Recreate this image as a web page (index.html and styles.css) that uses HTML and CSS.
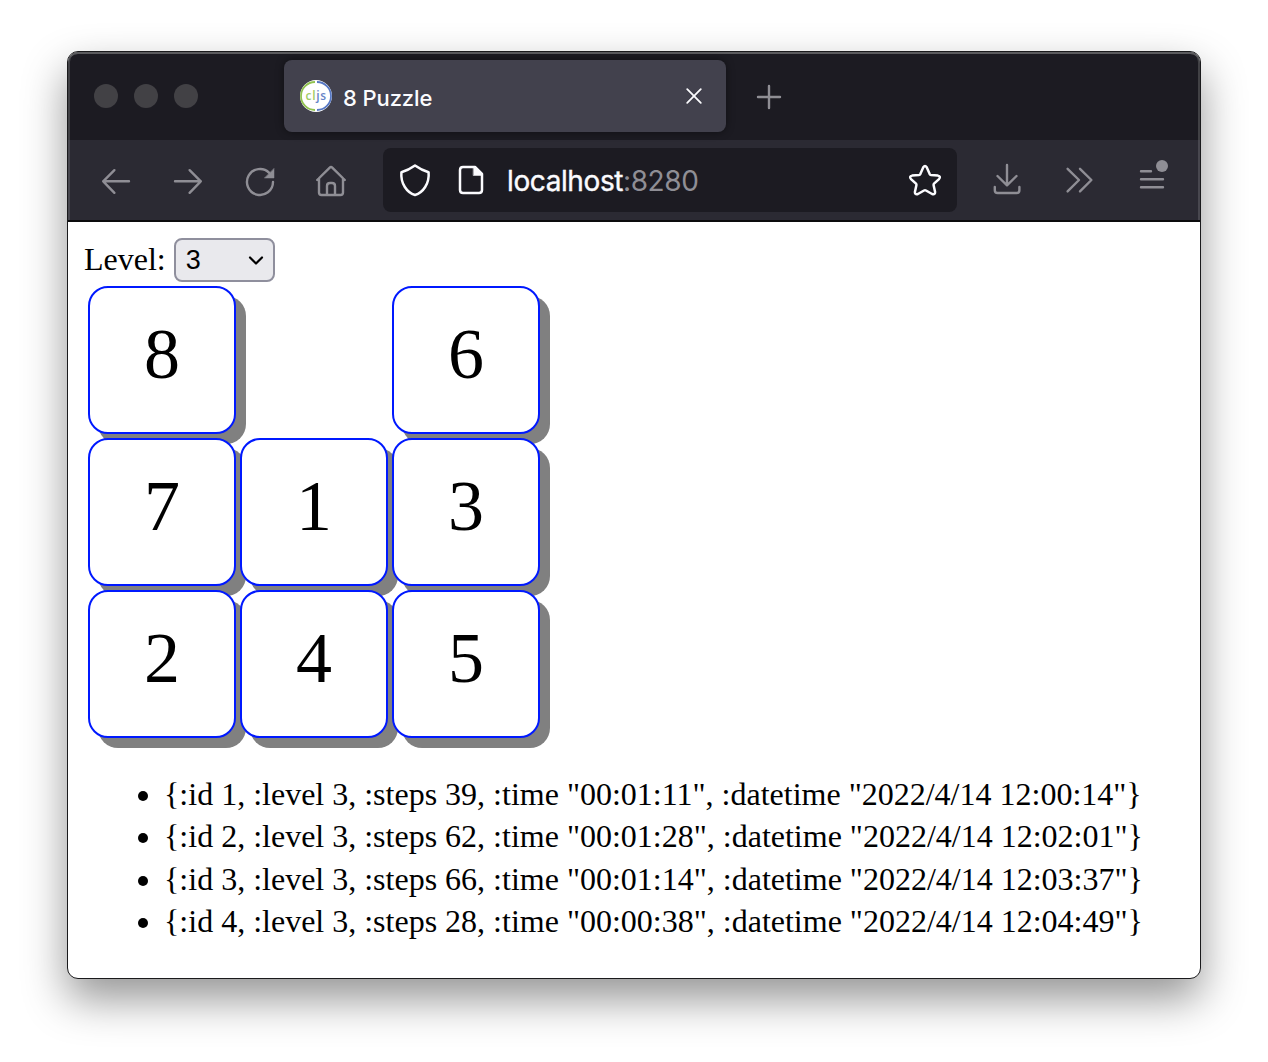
FILE: index.html
```html
<!DOCTYPE html>
<html lang="en">
<head>
<meta charset="utf-8">
<title>8 Puzzle</title>
<link rel="stylesheet" href="styles.css">
</head>
<body>
<div class="window">
  <header class="tabbar">
    <div class="lights"><i></i><i></i><i></i></div>
    <div class="tab">
      <svg class="favicon" viewBox="0 0 32 32">
        <circle cx="16" cy="16" r="16" fill="#fff"/>
        <path class="ring-green" d="M15 2A14 14 0 0 0 15 30"/>
        <path class="ring-blue" d="M17 2A14 14 0 0 1 17 30"/>
        <text x="5.600" y="20" class="cl">cl</text>
        <text x="16.300" y="20" class="js">js</text>
      </svg>
      <span class="tab-title">8 Puzzle</span>
      <svg class="close" viewBox="0 0 16 16"><path d="M1.2 1.2 14.8 14.8M14.8 1.2 1.2 14.8"/></svg>
    </div>
    <svg class="plus" viewBox="0 0 26 26"><path d="M13 2v22M2 13h22"/></svg>
  </header>
  <nav class="toolbar">
    <span class="btn"><svg viewBox="0 0 32 32"><path d="M14.4 6.2 3.2 17.3 14.4 28.8M3.2 17.3H29"/></svg></span>
    <span class="btn"><svg viewBox="0 0 32 32"><path d="M17.6 6.2 28.8 17.3 17.6 28.8M28.8 17.3H3"/></svg></span>
    <span class="btn"><svg viewBox="0 0 32 32"><path d="M29 18A13 13 0 1 1 25.2 8.8"/><path class="solid" d="M30 4.7V14H20.7z"/></svg></span>
    <span class="btn home"><svg viewBox="0 0 32 32"><path d="M2.2 16 14.5 3.8q1.5-1.4 3 0L29.800 16M4 14.500V28.500q0 2.500 2.500 2.500h19q2.500 0 2.500-2.500V14.500M12 31V22q0-3 3-3h2q3 0 3 3v9"/></svg></span>
    <div class="url">
      <svg viewBox="0 0 32 32"><path d="M16 1.500Q22.500 6.100 29.600 8.300C30.600 19.500 24 28.700 16 31C8 28.700 1.400 19.500 2.400 8.300Q9.500 6.100 16 1.500z"/></svg>
      <svg class="page-icon" viewBox="0 0 32 32"><path d="M20 3H8Q5 3 5 6V26q0 3 3 3H24q3 0 3-3V10z"/><path class="solid" d="M18.500 2.500 27.500 11.500H18.500z"/></svg>
      <span class="address"><span class="host">localhost</span>:8280</span>
      <svg class="star" viewBox="0 0 32 32"><path d="M14.300 3.200Q16 .600 17.700 3.200L20.700 10.100Q21.100 10.900 22 11L28.900 11.600Q32.200 12.300 30 15.100L25 19.700Q24.400 20.300 24.600 21.200L26.100 28Q26.200 31 23.100 30L17 26.500Q16 26 15 26.500L8.900 30Q5.800 31 5.900 28L7.400 21.200Q7.600 20.300 7 19.700L2 15.100Q-.200 12.300 3.100 11.600L10 11Q10.900 10.900 11.300 10.100z"/></svg>
    </div>
    <span class="btn download"><svg viewBox="0 0 32 32"><path d="M16 1V21M6.500 12 16 21.300 25.500 12M3.800 23v3.200q0 2.800 2.800 2.800h19q2.800 0 2.800-2.800V23"/></svg></span>
    <span class="btn"><svg viewBox="0 0 32 32"><path d="M4.600 4.800 16 16 4.600 27.400M17 4.800 28.400 16 17 27.400"/></svg></span>
    <span class="btn"><svg viewBox="0 0 32 32"><path d="M6 7.300h10M6 15.300h22M6 23.300h22"/><circle class="dot" cx="27" cy="2" r="6"/></svg></span>
  </nav>
  <main class="page">
    <div class="level"><span>Level:</span>
      <div class="select"><span>3</span><svg viewBox="0 0 16 12"><path d="M2 3.500 8 9.500 14 3.500"/></svg></div>
    </div>
    <div class="board">
      <div class="tile">8</div><div class="blank"></div><div class="tile">6</div>
      <div class="tile">7</div><div class="tile">1</div><div class="tile">3</div>
      <div class="tile">2</div><div class="tile">4</div><div class="tile">5</div>
    </div>
    <ul class="records">
      <li>{:id 1, :level 3, :steps 39, :time "00:01:11", :datetime "2022/4/14 12:00:14"}</li>
      <li>{:id 2, :level 3, :steps 62, :time "00:01:28", :datetime "2022/4/14 12:02:01"}</li>
      <li>{:id 3, :level 3, :steps 66, :time "00:01:14", :datetime "2022/4/14 12:03:37"}</li>
      <li>{:id 4, :level 3, :steps 28, :time "00:00:38", :datetime "2022/4/14 12:04:49"}</li>
    </ul>
  </main>
</div>
</body>
</html>
```
FILE: styles.css
```css
* { box-sizing: border-box; }
body { margin: 0; height: 1062px; padding: 51px 67px; background: #fff; overflow: hidden; }
svg { display: block; flex: none; overflow: visible; }
svg path { fill: none; stroke: currentColor; stroke-width: 2.4; stroke-linecap: round; stroke-linejoin: round; }
svg .solid { fill: currentColor; stroke-width: 0.5; }

.window {
  width: 1134px; height: 928px; overflow: hidden;
  border: 1px solid #1a1a1c; border-radius: 11px; background: #fff;
  box-shadow: 0 20px 44px rgba(0, 0, 0, 0.42);
}
.tabbar {
  display: flex; align-items: flex-start; height: 88px; padding: 8px 0 0 26px;
  background: #1c1b22;
  box-shadow: inset 0 2px #5b5b5e, inset 2px 0 #414145, inset -2px 0 #414145;
  border-radius: 10px 10px 0 0;
}
.lights { display: flex; gap: 16px; width: 190px; padding-top: 24px; }
.lights i { width: 24px; height: 24px; border-radius: 50%; background: #424145; }
.tab {
  display: flex; align-items: center; width: 442px; height: 72px; padding: 0 24px 0 16px;
  border-radius: 8px; background: #42414d; color: #fbfbfe; box-shadow: 0 0 8px rgba(0, 0, 0, 0.45);
}
.favicon { width: 32px; height: 32px; }
.favicon path { stroke-width: 1.8; stroke-linecap: butt; }
.favicon .ring-green { stroke: #91c250; }
.favicon .ring-blue { stroke: #5778c4; }
.favicon text { font: 600 12px "Open Sans", sans-serif; letter-spacing: 0.7px; }
.favicon .cl { fill: #a0cb63; }
.favicon .js { fill: #6685c8; }
.tab-title { flex: 1; padding: 3px 0 0 11px; font: 500 22px Inter, sans-serif; letter-spacing: -0.1px; }
.close { width: 16px; height: 16px; }
.close path { stroke-width: 1.8; }
.plus { width: 26px; height: 26px; margin: 24px 0 0 30px; color: #8f8e94; }

.toolbar {
  display: flex; align-items: center; height: 82px; padding: 0 0 0 12px;
  border-bottom: 2px solid #0c0c0d; background: #2b2a33; color: #8f8e95;
  box-shadow: inset 2px 0 #48474f, inset -2px 0 #48474f;
}
.btn { display: flex; justify-content: center; width: 72px; }
.btn svg { width: 32px; height: 32px; }
.btn.home { width: 70px; }
.dot { fill: #8f8e95; }
.url {
  display: flex; align-items: center; width: 574px; height: 64px; margin: 0 14px 0 17px; padding: 0 16px;
  border-radius: 8px; background: #1c1b22; color: #fbfbfe;
}
.url svg { width: 32px; height: 32px; }
.url svg path { stroke-width: 2.5; }
.url svg .solid { stroke-width: 0.5; }
.url .page-icon { margin-left: 24px; }
.address { flex: 1; padding: 2px 0 0 20px; font: 28px Inter, sans-serif; letter-spacing: -0.4px; color: #8f8e95; }
.host { color: #fbfbfe; -webkit-text-stroke: 0.4px #fbfbfe; }

.page { padding: 16px; font: 32px "Liberation Serif", serif; color: #000; }
.level { display: flex; align-items: center; gap: 8px; height: 44px; }
.level > span { padding-bottom: 1px; }
.select {
  display: flex; align-items: center; justify-content: space-between; width: 101px; height: 44px;
  padding: 0 9px 0 10px; border: 2px solid #8f8f9d; border-radius: 8px; background: #e9e9ed;
  font: 27px "Liberation Sans", sans-serif;
}
.select span { padding-top: 1px; }
.select svg { width: 16px; height: 12px; }
.select path { stroke-width: 2.2; }
.board { display: grid; grid-template-columns: repeat(3, 148px); grid-auto-rows: 148px; gap: 4px; margin: 4px 0 0 4px; }
.tile {
  display: flex; justify-content: center; border: 2px solid #0019ff; border-radius: 20px;
  background: #fff; box-shadow: 10px 10px gray; font-size: 72px; line-height: 132px;
}
.records { margin: 35px 0 0; padding: 0 0 0 80px; line-height: 42.4px; white-space: nowrap; }
```
